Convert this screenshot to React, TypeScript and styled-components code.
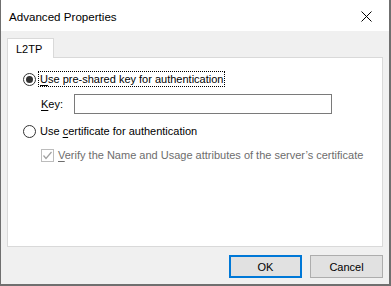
import React from "react";
import styled, { createGlobalStyle } from "styled-components";

const GlobalStyle = createGlobalStyle`
  html, body {
    margin: 0;
    padding: 0;
    background: #ffffff;
  }
  body {
    font-family: "Liberation Sans", "Noto Sans", Arial, sans-serif;
    font-size: 11px;
    color: #000000;
  }
`;

const Window = styled.div`
  width: 391px;
  height: 286px;
  box-sizing: border-box;
  border-left: 1px solid #6f6f6f;
  border-right: 2px solid #6f6f6f;
  border-bottom: 2px solid #6f6f6f;
  display: flex;
  flex-direction: column;
  background: #f0f0f0;
`;

const TitleBar = styled.div`
  height: 31px;
  background: #ffffff;
  display: flex;
  align-items: center;
  justify-content: space-between;
  padding: 1px 0 0 8px;
  box-sizing: border-box;
`;

const Title = styled.span`
  font-size: 11.6px;
  color: #000000;
`;

const CloseBtn = styled.div`
  width: 46px;
  height: 30px;
  display: flex;
  align-items: center;
  justify-content: center;
`;

const Body = styled.div`
  flex: 1;
  display: flex;
  flex-direction: column;
  padding: 7px 6px 0 6px;
`;

const TabStrip = styled.div`
  display: flex;
  height: 20px;
  position: relative;
  z-index: 1;
`;

const Tab = styled.div`
  width: 47px;
  height: 20px;
  background: #ffffff;
  border: 1px solid #d9d9d9;
  border-bottom: none;
  display: flex;
  align-items: center;
  padding-left: 8px;
  box-sizing: border-box;
`;

const Panel = styled.div`
  height: 190px;
  margin-top: -1px;
  background: #ffffff;
  border: 1px solid #d9d9d9;
  box-sizing: border-box;
  display: flex;
  flex-direction: column;
  padding: 13px 0 0 15px;
`;

const OptionRow = styled.div<{ $top?: number }>`
  display: flex;
  align-items: center;
  height: 16px;
  margin-top: ${(p) => p.$top ?? 0}px;
`;

const Radio = styled.span<{ $checked?: boolean }>`
  width: 13px;
  height: 13px;
  box-sizing: border-box;
  border: 1px solid #333333;
  border-radius: 50%;
  display: flex;
  align-items: center;
  justify-content: center;
  margin-right: 3px;
  background: #ffffff;
  &::after {
    content: "";
    display: ${(p) => (p.$checked ? "block" : "none")};
    width: 7px;
    height: 7px;
    border-radius: 50%;
    background: #333333;
  }
`;

const Label = styled.span<{ $focus?: boolean; $disabled?: boolean }>`
  padding: 0 1px;
  line-height: 14px;
  white-space: nowrap;
  color: ${(p) => (p.$disabled ? "#6d6d6d" : "#000000")};
  outline: ${(p) => (p.$focus ? "1px dotted #000000" : "none")};
`;

const Key = styled.span`
  text-decoration: underline;
  text-underline-offset: 2px;
`;

const KeyRow = styled.div`
  display: flex;
  align-items: center;
  height: 20px;
  margin-top: 7px;
  padding-left: 18px;
`;

const KeyLabel = styled.span`
  width: 33px;
`;

const TextBox = styled.div`
  width: 258px;
  height: 20px;
  box-sizing: border-box;
  border: 1px solid #7a7a7a;
  background: #ffffff;
`;

const CheckRow = styled.div`
  display: flex;
  align-items: center;
  height: 16px;
  margin-top: 8px;
  padding-left: 18px;
`;

const CheckBox = styled.span`
  width: 13px;
  height: 13px;
  box-sizing: border-box;
  border: 1px solid #bcbcbc;
  background: #ffffff;
  display: flex;
  align-items: center;
  justify-content: center;
  margin-right: 3px;
`;

const ButtonRow = styled.div`
  display: flex;
  justify-content: flex-end;
  gap: 8px;
  margin-top: 8px;
`;

const Button = styled.div<{ $primary?: boolean }>`
  width: 73px;
  height: 23px;
  box-sizing: border-box;
  background: #e1e1e1;
  border: ${(p) => (p.$primary ? "2px solid #0078d7" : "1px solid #adadad")};
  display: flex;
  align-items: center;
  justify-content: center;
  color: #000000;
`;

export default function App() {
  return (
    <>
      <GlobalStyle />
      <Window>
        <TitleBar>
          <Title>Advanced Properties</Title>
          <CloseBtn>
            <svg width="11" height="11" viewBox="0 0 11 11">
              <path d="M0.5 0.5 L10.5 10.5 M10.5 0.5 L0.5 10.5" stroke="#000" strokeWidth="1" />
            </svg>
          </CloseBtn>
        </TitleBar>
        <Body>
          <TabStrip>
            <Tab>L2TP</Tab>
          </TabStrip>
          <Panel>
            <OptionRow>
              <Radio $checked />
              <Label $focus>
                <Key>U</Key>se pre-shared key for authentication
              </Label>
            </OptionRow>
            <KeyRow>
              <KeyLabel>
                <Key>K</Key>ey:
              </KeyLabel>
              <TextBox />
            </KeyRow>
            <OptionRow $top={9}>
              <Radio />
              <Label>
                Use <Key>c</Key>ertificate for authentication
              </Label>
            </OptionRow>
            <CheckRow>
              <CheckBox>
                <svg width="11" height="11" viewBox="0 0 11 11">
                  <path d="M1.5 5.5 L4 8.5 L9.5 2" fill="none" stroke="#a0a0a0" strokeWidth="1.2" />
                </svg>
              </CheckBox>
              <Label $disabled>
                <Key>V</Key>erify the Name and Usage attributes of the server’s certificate
              </Label>
            </CheckRow>
          </Panel>
          <ButtonRow>
            <Button $primary>OK</Button>
            <Button>Cancel</Button>
          </ButtonRow>
        </Body>
      </Window>
    </>
  );
}
